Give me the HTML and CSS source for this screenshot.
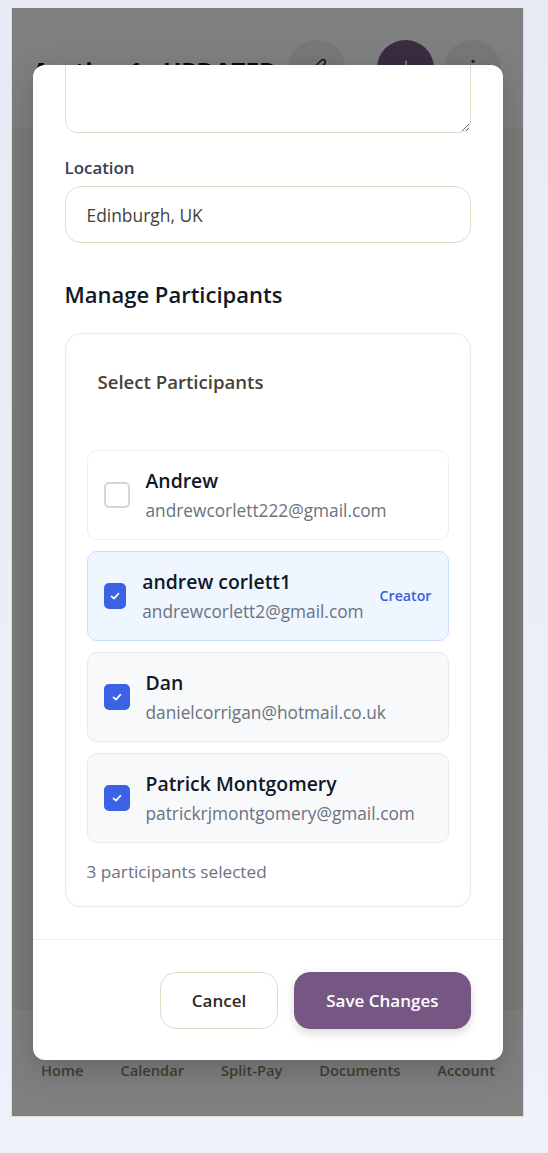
FILE: index.html
```html
<!DOCTYPE html>
<html lang="en">
<head>
<meta charset="utf-8">
<title>Edit Event</title>
<link rel="stylesheet" href="styles.css">
</head>
<body>
<div class="frame">
  <header class="app-header">
    <div class="title-wrap"><h1 class="title">Meeting 1 - UPDATED</h1></div>
    <button class="circle-btn" aria-label="Edit">
      <svg width="20" height="20" viewBox="0 0 24 24" fill="none" stroke="#333" stroke-width="2" stroke-linecap="round" stroke-linejoin="round"><path d="M17 3a2.85 2.83 0 1 1 4 4L7.5 20.5 2 22l1.5-5.5Z"/></svg>
    </button>
    <button class="circle-btn primary" aria-label="Add">
      <svg width="20" height="20" viewBox="0 0 24 24" fill="none" stroke="#fff" stroke-width="2.2" stroke-linecap="round"><path d="M12 4v16M4 12h16"/></svg>
    </button>
    <button class="circle-btn" aria-label="More">
      <svg width="20" height="20" viewBox="0 0 24 24" fill="#444"><circle cx="12" cy="4" r="2"/><circle cx="12" cy="12" r="2"/><circle cx="12" cy="20" r="2"/></svg>
    </button>
  </header>
  <main class="app-main"></main>
  <nav class="bottom-nav">
    <a class="nav-item">Home</a>
    <a class="nav-item">Calendar</a>
    <a class="nav-item">Split-Pay</a>
    <a class="nav-item">Documents</a>
    <a class="nav-item">Account</a>
  </nav>

  <div class="overlay">
    <div class="modal">
      <div class="modal-body" id="modalBody">
        <div class="field">
          <label class="field-label">Description</label>
          <textarea class="textarea"></textarea>
        </div>
        <div class="field">
          <label class="field-label">Location</label>
          <input class="input" type="text" value="Edinburgh, UK">
        </div>

        <h2 class="section-title">Manage Participants</h2>
        <div class="card">
          <h3 class="card-title">Select Participants</h3>
          <div class="list">
            <div class="item">
              <span class="check"></span>
              <div class="person">
                <div class="name">Andrew</div>
                <div class="email">andrewcorlett222@gmail.com</div>
              </div>
            </div>
            <div class="item item-creator">
              <span class="check checked"><svg width="12" height="12" viewBox="0 0 12 12" fill="none" stroke="#fff" stroke-width="1.6" stroke-linecap="round" stroke-linejoin="round"><path d="M2.5 6.3 5 8.6 9.5 3.6"/></svg></span>
              <div class="person">
                <div class="name">andrew corlett1</div>
                <div class="email">andrewcorlett2@gmail.com</div>
              </div>
              <span class="badge">Creator</span>
            </div>
            <div class="item item-selected">
              <span class="check checked"><svg width="12" height="12" viewBox="0 0 12 12" fill="none" stroke="#fff" stroke-width="1.6" stroke-linecap="round" stroke-linejoin="round"><path d="M2.5 6.3 5 8.6 9.5 3.6"/></svg></span>
              <div class="person">
                <div class="name">Dan</div>
                <div class="email">danielcorrigan@hotmail.co.uk</div>
              </div>
            </div>
            <div class="item item-selected">
              <span class="check checked"><svg width="12" height="12" viewBox="0 0 12 12" fill="none" stroke="#fff" stroke-width="1.6" stroke-linecap="round" stroke-linejoin="round"><path d="M2.5 6.3 5 8.6 9.5 3.6"/></svg></span>
              <div class="person">
                <div class="name">Patrick Montgomery</div>
                <div class="email">patrickrjmontgomery@gmail.com</div>
              </div>
            </div>
          </div>
          <p class="count">3 participants selected</p>
        </div>
      </div>
      <div class="modal-footer">
        <button class="btn btn-outline">Cancel</button>
        <button class="btn btn-primary">Save Changes</button>
      </div>
    </div>
  </div>
</div>
<script src="script.js"></script>
</body>
</html>
```

FILE: styles.css
```css
* { box-sizing: border-box; }
html, body { margin: 0; padding: 0; }
body {
  width: 548px;
  height: 1153px;
  overflow: hidden;
  background: linear-gradient(#e8ebf3, #eef1fa);
  font-family: "Open Sans", "Liberation Sans", sans-serif;
  color: #111827;
}
.frame {
  position: relative;
  margin: 8px 0 0 11px;
  width: 513px;
  height: 1109px;
  border: 1px solid #e4ddcc;
  border-top: none;
  background: #f6f5f3;
  display: flex;
  flex-direction: column;
  overflow: hidden;
}
.app-header {
  height: 120px;
  background: #fff;
  display: flex;
  align-items: center;
  padding: 0 22px 0 22px;
  flex-shrink: 0;
}
.title-wrap {
  flex: 1;
  min-width: 0;
  overflow: hidden;
  display: flex;
  justify-content: flex-end;
  margin-right: 11px;
  padding-top: 8px;
}
.title {
  margin: 0;
  white-space: nowrap;
  font-size: 24.3px;
  line-height: 34px;
  font-weight: 700;
  color: #111;
}
.circle-btn {
  width: 57px;
  height: 57px;
  border-radius: 50%;
  border: none;
  background: #eeeeee;
  display: flex;
  align-items: center;
  justify-content: center;
  padding: 0;
  flex-shrink: 0;
}
.circle-btn.primary { background: #765682; margin: 0 10px 0 32px; }
.app-main { flex: 1; }
.bottom-nav {
  height: 106px;
  flex-shrink: 0;
  background: #fff;
  display: flex;
  justify-content: space-between;
  padding: 49px 28px 0 29px;
}
.nav-item {
  font-size: 14.7px;
  font-weight: 600;
  color: #8e7c62;
  line-height: 22px;
}
.overlay {
  position: absolute;
  inset: 0;
  background: rgba(0,0,0,0.5);
  display: flex;
  align-items: center;
  justify-content: center;
}
.modal {
  width: 470px;
  height: 995px;
  background: #fff;
  border-radius: 12px;
  display: flex;
  flex-direction: column;
  overflow: hidden;
  box-shadow: 0 10px 30px rgba(0,0,0,0.2);
}
.modal-body {
  flex: 1;
  min-height: 0;
  overflow-y: auto;
  padding: 32px;
  scrollbar-width: none;
}
.modal-body::-webkit-scrollbar { width: 0; height: 0; }
.field { margin-bottom: 23px; }
.field-label {
  display: block;
  font-size: 16.9px;
  font-weight: 600;
  line-height: 24px;
  color: #374151;
  margin-bottom: 6px;
}
.textarea {
  display: block;
  width: 100%;
  height: 110px;
  border: 1px solid #e0d9c6;
  border-radius: 12px;
  font: inherit;
  padding: 16px 21px;
}
.input {
  display: block;
  width: 100%;
  height: 57px;
  border: 1px solid #e0d9c6;
  border-radius: 16px;
  padding: 1px 21px 0;
  font-family: inherit;
  font-size: 17.4px;
  color: #3f3f3f;
  background: #fff;
}
.section-title {
  margin: 37px 0 25px;
  font-size: 22px;
  line-height: 28px;
  font-weight: 600;
  color: #111827;
}
.card {
  border: 1px solid #eeeae2;
  border-radius: 16px;
  padding: 21px 21px 22px;
  box-shadow: 0 1px 2px rgba(0,0,0,0.03);
}
.card-title {
  margin: 0 0 54px;
  padding: 13px 11px 0;
  font-size: 18.6px;
  line-height: 28px;
  font-weight: 600;
  color: #47413a;
}
.list { display: flex; flex-direction: column; gap: 11px; }
.item {
  display: flex;
  align-items: center;
  gap: 16px;
  padding: 16px;
  border: 1px solid #efefef;
  border-radius: 10px;
  background: #fff;
}
.item-creator { background: #eff6ff; border-color: #cadcf8; }
.item-selected { background: #f8f9fb; border-color: #e7e8ec; }
.check {
  width: 26px;
  height: 26px;
  border-radius: 5px;
  border: 2px solid #d4d6db;
  background: #fff;
  display: flex;
  align-items: center;
  justify-content: center;
}
.check.checked { background: #3b62e4; border-color: #3b62e4; }
.person { flex: 1 1 auto; }
.name {
  font-size: 19.4px;
  line-height: 28px;
  font-weight: 600;
  color: #111827;
}
.email {
  margin-top: 4px;
  font-size: 17.3px;
  line-height: 24px;
  color: #6b7280;
}
.badge {
  font-size: 14.2px;
  font-weight: 600;
  color: #3b5fe0;
}
.count {
  margin: 17px 0 0;
  font-size: 17.2px;
  line-height: 24px;
  color: #6b7280;
}
.modal-footer {
  border-top: 1px solid #ededed;
  padding: 32px 32px 31px;
  display: flex;
  justify-content: flex-end;
  gap: 16px;
  flex-shrink: 0;
}
.btn {
  height: 57px;
  padding: 0 31px;
  border-radius: 16px;
  font-family: inherit;
  font-size: 17px;
  font-weight: 600;
}
.btn-outline { background: #fff; border: 1px solid #e2dac6; color: #2f2a24; }
.btn-primary {
  background: #765682;
  border: 1px solid #765682;
  color: #fff;
  box-shadow: 0 4px 10px rgba(0,0,0,0.15);
}
```

FILE: script.js
```js
var body = document.getElementById('modalBody');
body.scrollTop = body.scrollHeight;
```
